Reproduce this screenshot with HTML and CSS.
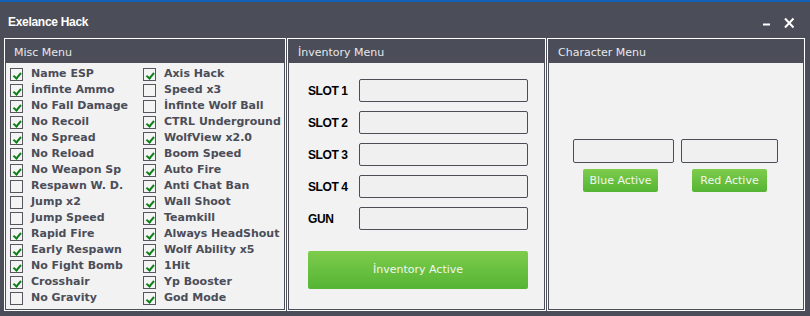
FILE: index.html
```html
<!DOCTYPE html>
<html lang="tr">
<head>
    <meta charset="UTF-8">
    <title>Exelance Hack</title>
    <link rel="stylesheet" href="styles.css">
</head>
<body>
    <div class="topline"></div>
    <div class="titlebar">
        <span class="title">Exelance Hack</span>
        <div class="controls">
            <svg class="min" width="8" height="12" viewBox="0 0 8 12"><rect x="0" y="6.5" width="7" height="2" fill="#fff"/></svg>
            <svg class="close" width="10" height="12" viewBox="0 0 10 12"><path d="M1 1.5 L9.5 10.5 M9.5 1.5 L1 10.5" stroke="#fff" stroke-width="2" fill="none"/></svg>
        </div>
    </div>

    <div class="panels">
        <section class="panel misc">
            <div class="panel-head">Misc Menu</div>
            <div class="panel-body">
                <div class="checks">
                    <label class="check"><span class="box on"></span>Name ESP</label>
                    <label class="check"><span class="box on"></span>Axis Hack</label>
                    <label class="check"><span class="box on"></span>İnfinte Ammo</label>
                    <label class="check"><span class="box"></span>Speed x3</label>
                    <label class="check"><span class="box on"></span>No Fall Damage</label>
                    <label class="check"><span class="box"></span>İnfinte Wolf Ball</label>
                    <label class="check"><span class="box on"></span>No Recoil</label>
                    <label class="check"><span class="box on"></span>CTRL Underground</label>
                    <label class="check"><span class="box on"></span>No Spread</label>
                    <label class="check"><span class="box on"></span>WolfView x2.0</label>
                    <label class="check"><span class="box on"></span>No Reload</label>
                    <label class="check"><span class="box on"></span>Boom Speed</label>
                    <label class="check"><span class="box on"></span>No Weapon Sp</label>
                    <label class="check"><span class="box on"></span>Auto Fire</label>
                    <label class="check"><span class="box"></span>Respawn W. D.</label>
                    <label class="check"><span class="box on"></span>Anti Chat Ban</label>
                    <label class="check"><span class="box"></span>Jump x2</label>
                    <label class="check"><span class="box on"></span>Wall Shoot</label>
                    <label class="check"><span class="box"></span>Jump Speed</label>
                    <label class="check"><span class="box on"></span>Teamkill</label>
                    <label class="check"><span class="box on"></span>Rapid Fire</label>
                    <label class="check"><span class="box on"></span>Always HeadShout</label>
                    <label class="check"><span class="box on"></span>Early Respawn</label>
                    <label class="check"><span class="box on"></span>Wolf Ability x5</label>
                    <label class="check"><span class="box on"></span>No Fight Bomb</label>
                    <label class="check"><span class="box on"></span>1Hit</label>
                    <label class="check"><span class="box on"></span>Crosshair</label>
                    <label class="check"><span class="box on"></span>Yp Booster</label>
                    <label class="check"><span class="box"></span>No Gravity</label>
                    <label class="check"><span class="box on"></span>God Mode</label>
                </div>
            </div>
        </section>

        <section class="panel inventory">
            <div class="panel-head">İnventory Menu</div>
            <div class="panel-body">
                <div class="slots">
                    <div class="slot"><span class="slot-label">SLOT 1</span><div class="field"></div></div>
                    <div class="slot"><span class="slot-label">SLOT 2</span><div class="field"></div></div>
                    <div class="slot"><span class="slot-label">SLOT 3</span><div class="field"></div></div>
                    <div class="slot"><span class="slot-label">SLOT 4</span><div class="field"></div></div>
                    <div class="slot"><span class="slot-label">GUN</span><div class="field"></div></div>
                </div>
                <div class="btn big">İnventory Active</div>
            </div>
        </section>

        <section class="panel character">
            <div class="panel-head">Character Menu</div>
            <div class="panel-body">
                <div class="char-grid">
                    <div class="field blue-field"></div>
                    <div class="field red-field"></div>
                    <div class="btn small blue-btn">Blue Active</div>
                    <div class="btn small red-btn">Red Active</div>
                </div>
            </div>
        </section>
    </div>
</body>
</html>
```

FILE: styles.css
```css
* {
    margin: 0;
    padding: 0;
    box-sizing: border-box;
}

body {
    width: 810px;
    height: 316px;
    overflow: hidden;
    background: #4b4d58;
    font-family: "DejaVu Sans", Verdana, sans-serif;
}

.topline {
    height: 2px;
    background: #1161b9;
}

.titlebar {
    height: 36px;
    display: flex;
    align-items: center;
    padding: 0 16px 0 8px;
}

.title {
    font-family: "Liberation Sans", Arial, sans-serif;
    font-weight: bold;
    font-size: 12px;
    letter-spacing: -0.3px;
    color: #fff;
    margin-top: 3px;
}

.controls {
    margin-left: auto;
    margin-top: 5px;
    display: flex;
    align-items: center;
    gap: 13px;
}

.controls svg {
    display: block;
}

.panels {
    display: flex;
    gap: 1px;
    padding-left: 4px;
    height: 273px;
}

.panel {
    border: 1px solid #fff;
    display: flex;
    flex-direction: column;
}

.misc { width: 282px; }
.inventory { width: 259px; }
.character { width: 258px; }

.panel-head {
    height: 24px;
    line-height: 21px;
    padding: 3px 0 0 10px;
    font-size: 11px;
    color: #e8e8ec;
}

.misc .panel-head {
    padding-left: 9px;
}

.panel-body {
    flex: 1;
    background: #f2f2f2;
    border: 1px solid #4b4d58;
    border-top: none;
}

/* misc menu */
.checks {
    display: grid;
    grid-template-columns: 133px 1fr;
    grid-auto-rows: 16px;
    padding: 3px 0 0 4px;
}

.check {
    display: flex;
    align-items: flex-start;
    font-size: 11px;
    font-weight: bold;
    line-height: 15px;
    color: #4b4d58;
    white-space: nowrap;
}

.box {
    position: relative;
    width: 13px;
    height: 13px;
    margin-top: 2px;
    margin-right: 8px;
    flex: none;
    border: 1px solid #555660;
    background: #f4f4f4;
}

.box.on::after {
    content: "";
    position: absolute;
    left: 3.5px;
    top: 1.5px;
    width: 2.5px;
    height: 5.5px;
    border: solid #10801a;
    border-width: 0 2px 2px 0;
    transform: rotate(40deg);
}

/* inventory menu */
.inventory .panel-body {
    padding: 16px 0 0 19px;
}

.slots {
    display: flex;
    flex-direction: column;
    gap: 9px;
}

.slot {
    display: flex;
    align-items: center;
}

.slot-label {
    width: 51px;
    font-family: "Liberation Sans", Arial, sans-serif;
    font-weight: bold;
    font-size: 12px;
    letter-spacing: -0.4px;
    color: #000;
}

.field {
    height: 23px;
    border: 1px solid #4b4d58;
    border-radius: 2px;
    background: #f0f0f0;
}

.slot .field {
    width: 169px;
}

.btn {
    background: linear-gradient(#7ecc4c, #55b434);
    color: #f2f6f0;
    font-size: 11px;
    text-align: center;
    border-radius: 2px;
}

.big {
    width: 220px;
    height: 38px;
    line-height: 38px;
    margin-top: 21px;
}

/* character menu */
.character .panel-body {
    padding: 76px 0 0 24px;
}

.char-grid {
    display: grid;
    grid-template-columns: 101px 97px;
    column-gap: 7px;
    row-gap: 6px;
}

.char-grid .field {
    height: 24px;
}

.small {
    width: 75px;
    height: 23px;
    line-height: 23px;
}

.blue-btn { margin-left: 10px; }
.red-btn { margin-left: 11px; }
```
